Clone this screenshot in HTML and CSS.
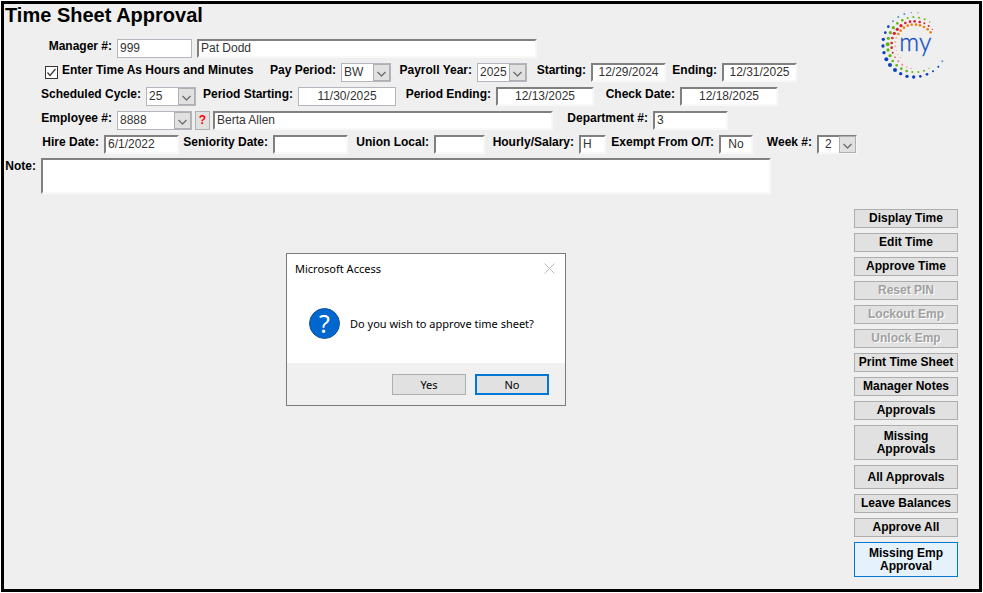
FILE: index.html
```html
<!DOCTYPE html>
<html lang="en">
<head>
  <meta charset="UTF-8" />
  <meta name="viewport" content="width=device-width, initial-scale=1.0"/>
  <title>Time Sheet Approval</title>
  <link rel="stylesheet" href="styles.css">
</head>
<body>
<div class="window">

  <!-- Header fields -->
  <div class="top">
    <form class="fields">
      <h1>Time Sheet Approval</h1>

      <div class="row">
        <label class="w113" for="managerNo">Manager #:</label>
        <input class="flat date" type="text" id="managerNo" value="999">
        <input class="sunken name gap" type="text" aria-label="Manager name" value="Pat Dodd">
      </div>

      <div class="row">
        <span class="check">
          <input type="checkbox" id="hoursMinutes" checked>
          <svg viewBox="0 0 13 13" width="13" height="13"><path d="M2.5 6.5 L5 9.5 L10.5 3" fill="none" stroke="#333" stroke-width="1.2"/></svg>
        </span>
        <label class="check-label" for="hoursMinutes">Enter Time As Hours and Minutes</label>
        <label class="w86" for="payPeriod">Pay Period:</label>
        <span class="combo short">
          <select id="payPeriod"><option>BW</option></select>
          <svg viewBox="0 0 17 17"><path d="M4 8 L8.5 12.5 L13 8"/></svg>
        </span>
        <label class="w86" for="payrollYear">Payroll Year:</label>
        <span class="combo short">
          <select id="payrollYear"><option>2025</option></select>
          <svg viewBox="0 0 17 17"><path d="M4 8 L8.5 12.5 L13 8"/></svg>
        </span>
        <label class="w64" for="starting">Starting:</label>
        <input class="sunken date center" type="text" id="starting" value="12/29/2024">
        <label class="w56" for="ending">Ending:</label>
        <input class="sunken date center" type="text" id="ending" value="12/31/2025">
      </div>

      <div class="row">
        <label class="w142" for="cycle">Scheduled Cycle:</label>
        <span class="combo short">
          <select id="cycle"><option>25</option></select>
          <svg viewBox="0 0 17 17"><path d="M4 8 L8.5 12.5 L13 8"/></svg>
        </span>
        <label class="w102" for="periodStart">Period Starting:</label>
        <input class="flat period center" type="text" id="periodStart" value="11/30/2025">
        <label class="w100" for="periodEnd">Period Ending:</label>
        <input class="sunken period center" type="text" id="periodEnd" value="12/13/2025">
        <label class="w86" for="checkDate">Check Date:</label>
        <input class="sunken period center" type="text" id="checkDate" value="12/18/2025">
      </div>

      <div class="row">
        <label class="w113" for="employeeNo">Employee #:</label>
        <span class="combo long">
          <select id="employeeNo"><option>8888</option></select>
          <svg viewBox="0 0 17 17"><path d="M4 8 L8.5 12.5 L13 8"/></svg>
        </span>
        <button class="lookup" type="button">?</button>
        <input class="sunken name" type="text" aria-label="Employee name" value="Berta Allen">
        <label class="w100" for="department">Department #:</label>
        <input class="sunken date" type="text" id="department" value="3">
      </div>

      <div class="row">
        <label class="w100" for="hireDate">Hire Date:</label>
        <input class="sunken date" type="text" id="hireDate" value="6/1/2022">
        <label class="w94" for="seniority">Seniority Date:</label>
        <input class="sunken date" type="text" id="seniority">
        <label class="w86" for="union">Union Local:</label>
        <input class="sunken code" type="text" id="union">
        <label class="w94" for="hourly">Hourly/Salary:</label>
        <input class="sunken flag" type="text" id="hourly" value="H">
        <label class="w113" for="exempt">Exempt From O/T:</label>
        <input class="sunken yesno center" type="text" id="exempt" value="No">
        <label class="w64" for="week">Week #:</label>
        <span class="combo week">
          <select id="week"><option>2</option></select>
          <svg viewBox="0 0 17 17"><path d="M4 8 L8.5 12.5 L13 8"/></svg>
        </span>
      </div>

      <div class="row note">
        <label for="note">Note:</label>
        <textarea class="sunken" id="note"></textarea>
      </div>
    </form>

    <svg class="logo" viewBox="60 30 201 210" role="img" aria-label="my">
      <g fill="#0a3fc0">
        <circle cx="79" cy="178" r="6"/><circle cx="90" cy="195" r="6"/><circle cx="105" cy="210" r="6"/>
        <circle cx="122" cy="221" r="5"/><circle cx="141" cy="229" r="5"/><circle cx="161" cy="231" r="5"/>
        <circle cx="181" cy="229" r="4"/><circle cx="201" cy="223" r="4"/><circle cx="219" cy="214" r="3"/>
        <circle cx="235" cy="200" r="3"/><circle cx="72" cy="158" r="5"/><circle cx="69" cy="138" r="5"/>
        <circle cx="70" cy="118" r="5"/><circle cx="76" cy="98" r="4"/><circle cx="85" cy="80" r="4"/>
      </g>
      <g fill="#5b8fd6">
        <circle cx="99" cy="64" r="3"/><circle cx="115" cy="51" r="3"/><circle cx="133" cy="42" r="3"/>
        <circle cx="154" cy="38" r="2"/><circle cx="174" cy="38" r="2"/><circle cx="247" cy="184" r="3"/>
      </g>
      <g fill="#67b50e">
        <circle cx="90" cy="167" r="5"/><circle cx="84" cy="150" r="5"/><circle cx="83" cy="133" r="6"/>
        <circle cx="85" cy="115" r="5"/><circle cx="91" cy="98" r="5"/><circle cx="100" cy="83" r="5"/>
        <circle cx="112" cy="70" r="4"/><circle cx="127" cy="61" r="4"/><circle cx="143" cy="54" r="3"/>
        <circle cx="160" cy="51" r="3"/><circle cx="177" cy="53" r="3"/><circle cx="194" cy="58" r="3"/>
        <circle cx="209" cy="66" r="2"/><circle cx="98" cy="183" r="4"/><circle cx="110" cy="196" r="4"/>
        <circle cx="124" cy="206" r="4"/><circle cx="140" cy="213" r="4"/><circle cx="157" cy="216" r="3"/>
        <circle cx="175" cy="216" r="3"/><circle cx="192" cy="212" r="3"/><circle cx="207" cy="205" r="2"/>
      </g>
      <g fill="#d8203c">
        <circle cx="95" cy="129" r="4"/><circle cx="97" cy="114" r="4"/><circle cx="103" cy="100" r="5"/>
        <circle cx="112" cy="88" r="5"/><circle cx="123" cy="77" r="5"/><circle cx="136" cy="69" r="4"/>
        <circle cx="150" cy="65" r="4"/><circle cx="164" cy="64" r="4"/><circle cx="179" cy="66" r="4"/>
        <circle cx="193" cy="70" r="3"/><circle cx="206" cy="78" r="3"/><circle cx="217" cy="88" r="2"/>
        <circle cx="95" cy="143" r="4"/><circle cx="98" cy="158" r="3"/>
      </g>
      <g fill="#e87a98">
        <circle cx="105" cy="172" r="3"/><circle cx="115" cy="184" r="3"/><circle cx="127" cy="194" r="3"/>
        <circle cx="141" cy="201" r="2"/><circle cx="153" cy="205" r="2"/>
      </g>
      <g fill="#f08010">
        <circle cx="115" cy="102" r="4"/><circle cx="122" cy="92" r="4"/><circle cx="132" cy="83" r="4"/>
        <circle cx="143" cy="77" r="4"/><circle cx="155" cy="74" r="4"/><circle cx="168" cy="74" r="4"/>
        <circle cx="180" cy="76" r="4"/><circle cx="192" cy="81" r="4"/><circle cx="203" cy="88" r="4"/>
        <circle cx="212" cy="97" r="4"/>
      </g>
      <g fill="#f3b877">
        <circle cx="109" cy="113" r="3"/><circle cx="106" cy="126" r="3"/><circle cx="106" cy="139" r="3"/>
        <circle cx="109" cy="151" r="2"/><circle cx="114" cy="163" r="2"/><circle cx="121" cy="173" r="2"/>
      </g>
      <text x="118" y="152">my</text>
    </svg>
  </div>

  <!-- Actions -->
  <div class="actions">
    <button type="button">Display Time</button>
    <button type="button">Edit Time</button>
    <button type="button">Approve Time</button>
    <button type="button" disabled>Reset PIN</button>
    <button type="button" disabled>Lockout Emp</button>
    <button type="button" disabled>Unlock Emp</button>
    <button type="button">Print Time Sheet</button>
    <button type="button">Manager Notes</button>
    <button type="button">Approvals</button>
    <button type="button" class="tall">Missing<br>Approvals</button>
    <button type="button" class="mid">All Approvals</button>
    <button type="button">Leave Balances</button>
    <button type="button">Approve All</button>
    <button type="button" class="tall active">Missing Emp<br>Approval</button>
  </div>

  <!-- Confirm dialog -->
  <div class="dialog" role="dialog" aria-labelledby="dialogTitle">
    <div class="dialog-title">
      <span id="dialogTitle">Microsoft Access</span>
      <button class="close" type="button" aria-label="Close">
        <svg viewBox="0 0 11 11" width="11" height="11"><path d="M0.5 0.5 L10.5 10.5 M10.5 0.5 L0.5 10.5" stroke="#bdbdbd" fill="none"/></svg>
      </button>
    </div>
    <div class="dialog-body">
      <span class="question">?</span>
      <p>Do you wish to approve time sheet?</p>
    </div>
    <div class="dialog-buttons">
      <button type="button">Yes</button>
      <button type="button" class="default">No</button>
    </div>
  </div>

</div>
</body>
</html>
```

FILE: styles.css
```css
* {
  box-sizing: border-box;
}

body {
  margin: 0;
  padding: 1px;
  background: #ffffff;
  font-family: "Liberation Sans", Arial, sans-serif;
  font-size: 12px;
  color: #000000;
}

input,
select,
textarea,
button {
  margin: 0;
  font: inherit;
  color: inherit;
  border-radius: 0;
}

.window {
  position: relative;
  min-height: calc(100vh - 2px);
  border: 3px solid #000000;
  background: #efefef;
}

.top {
  display: flex;
  justify-content: space-between;
  align-items: flex-start;
}

h1 {
  margin: 0;
  padding-left: 1px;
  height: 32px;
  font-size: 20px;
  line-height: 22px;
}

.fields {
  flex: none;
}

.row {
  display: flex;
  align-items: center;
  height: 24px;
}

label {
  flex: none;
  padding-right: 5px;
  line-height: 16px;
  padding-bottom: 4px;
  font-weight: bold;
  text-align: right;
  white-space: nowrap;
}

.w56 { width: 56px; }
.w64 { width: 64px; }
.w86 { width: 86px; }
.w94 { width: 94px; }
.w100 { width: 100px; }
.w102 { width: 102px; }
.w113 { width: 113px; }
.w142 { width: 142px; }

/* Text boxes */
.flat,
.sunken {
  height: 19px;
  padding: 0 2px;
  background: #ffffff;
  color: #333333;
  outline: none;
}

.flat {
  border: 1px solid #b4b5bd;
}

.sunken {
  border: 2px solid;
  border-color: #808080 #f8f8f8 #f8f8f8 #808080;
}

.center { text-align: center; }
.gap { margin-left: 5px; }
.date { width: 75px; }
.period { width: 98px; }
.name { width: 340px; }
.code { width: 51px; }
.flag { width: 27px; }
.yesno { width: 34px; }

/* Drop-downs */
.combo {
  position: relative;
  height: 19px;
}

.combo select {
  appearance: none;
  width: 100%;
  height: 19px;
  padding: 0 2px;
  border: 1px solid #b4b5bd;
  background: #ffffff;
  color: #333333;
}

.combo svg {
  position: absolute;
  top: 1px;
  right: 1px;
  width: 17px;
  height: 17px;
  border: 1px solid #b0b0b0;
  background: #e1e1e1;
  fill: none;
  stroke: #707070;
  stroke-width: 1.6;
  pointer-events: none;
}

.short { width: 50px; }
.long { width: 75px; }
.week { width: 40px; }

.week select {
  padding-left: 6px;
  border: 2px solid;
  border-color: #808080 #f8f8f8 #f8f8f8 #808080;
}

/* Check box */
.check {
  position: relative;
  width: 13px;
  height: 13px;
  margin-left: 41px;
}

.check input {
  appearance: none;
  display: block;
  width: 13px;
  height: 13px;
  border: 1px solid #333333;
  background: #ffffff;
}

.check svg {
  position: absolute;
  top: 0;
  left: 0;
  pointer-events: none;
}

.check-label {
  width: 197px;
  padding-left: 4px;
  padding-right: 0;
  text-align: left;
}

.lookup {
  width: 15px;
  height: 19px;
  margin: 0 3px;
  padding: 0;
  border: 1px solid #b0b0b0;
  background: #e1e1e1;
  color: #ff0000;
  font-weight: bold;
}

.note {
  height: 36px;
  margin-top: 2px;
  align-items: flex-start;
}

.note label {
  width: 37px;
}

.note textarea {
  width: 730px;
  height: 36px;
  resize: none;
}

.logo {
  width: 67px;
  height: 70px;
  margin: 6px 32px 0 0;
}

.logo text {
  font-family: Lato, sans-serif;
  font-size: 74px;
  font-weight: 300;
  fill: #1450c0;
  stroke: #1450c0;
  stroke-width: 1;
}

/* Actions */
.actions {
  display: flex;
  flex-direction: column;
  gap: 5px;
  width: 104px;
  margin: 15px 21px 10px auto;
}

.actions button {
  height: 19px;
  padding: 0;
  border: 1px solid #adadad;
  background: #e1e1e1;
  font-weight: bold;
  line-height: 13px;
  white-space: nowrap;
}

.actions button:disabled {
  color: #a0a0a0;
  text-shadow: 1px 1px 0 #ffffff;
}

.actions .mid {
  height: 24px;
}

.actions .tall {
  height: 35px;
}

.actions .active {
  border-color: #0078d7;
  background: #e5f1fb;
}

/* Dialog */
.dialog {
  position: absolute;
  top: 249px;
  left: 282px;
  width: 280px;
  border: 1px solid #7a7a7a;
  background: #ffffff;
  font-family: "Noto Sans", "Open Sans", sans-serif;
  font-size: 11px;
}

.dialog-title {
  display: flex;
  justify-content: space-between;
  align-items: center;
  height: 30px;
  padding: 0 10px 2px 8px;
}

.close {
  display: flex;
  padding: 0;
  border: none;
  background: none;
}

.dialog-body {
  display: flex;
  align-items: center;
  gap: 10px;
  height: 79px;
  padding-left: 22px;
}

.dialog-body p {
  margin: 0;
}

.question {
  width: 31px;
  height: 31px;
  border: 1px solid #17539b;
  border-radius: 50%;
  background: #0067cf;
  color: #ffffff;
  font-size: 25px;
  line-height: 28px;
  text-align: center;
}

.dialog-buttons {
  display: flex;
  justify-content: flex-end;
  gap: 9px;
  padding: 11px 16px 10px;
  background: #f0f0f0;
}

.dialog-buttons button {
  width: 74px;
  height: 21px;
  padding: 0;
  border: 1px solid #adadad;
  background: #e1e1e1;
}

.dialog-buttons .default {
  border: 2px solid #0078d7;
}
```
